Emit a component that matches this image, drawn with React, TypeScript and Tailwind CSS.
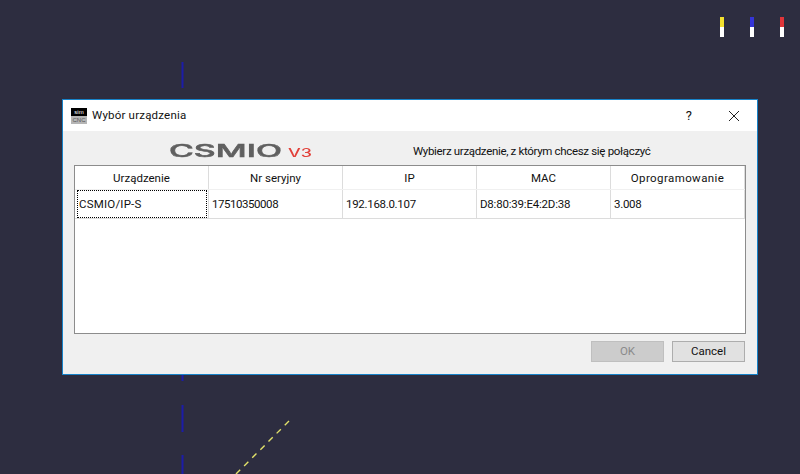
const columns = [
  { title: "Urządzenie", value: "CSMIO/IP-S", head: "", cell: "tracking-[0.2px]" },
  { title: "Nr seryjny", value: "17510350008", head: "", cell: "tracking-[-0.45px]" },
  { title: "IP", value: "192.168.0.107", head: "", cell: "tracking-[-0.3px]" },
  { title: "MAC", value: "D8:80:39:E4:2D:38", head: "", cell: "tracking-[-0.2px]" },
  { title: "Oprogramowanie", value: "3.008", head: "tracking-[0.4px]", cell: "tracking-[-0.3px]" },
];

function Marker({ color, x }: { color: string; x: string }) {
  return (
    <div className={`absolute top-[17px] flex h-5 w-1 flex-col ${x}`}>
      <div className={`h-[10px] ${color}`} />
      <div className="h-[10px] bg-white" />
    </div>
  );
}

function Canvas() {
  return (
    <svg className="absolute inset-0" width="800" height="474" viewBox="0 0 800 474">
      <g stroke="#1c1ca8" strokeWidth="2" fill="none">
        <path d="M182.500 62V88" />
        <path d="M182.500 375V381" />
        <path d="M182.500 405V432" />
        <path d="M182.500 455V474" />
      </g>
      <path d="M289 421L236 474" stroke="#e2e26a" strokeWidth="1.400" strokeDasharray="6 5.500" fill="none" />
    </svg>
  );
}

function Logo() {
  return (
    <svg width="150" height="22" viewBox="0 0 150 22" className="shrink-0 font-['Inter',sans-serif] font-medium">
      <defs>
        <filter id="soft" x="-10%" y="-30%" width="120%" height="160%">
          <feGaussianBlur stdDeviation="0.6" />
        </filter>
      </defs>
      <g filter="url(#soft)">
        <text x="0" y="16.500" fontSize="17" fill="#606060" stroke="#606060" strokeWidth="0.500" textLength="113" lengthAdjust="spacingAndGlyphs">CSMIO</text>
        <text x="119" y="16.500" fontSize="11.500" fill="#e2413a" textLength="24" lengthAdjust="spacingAndGlyphs">V3</text>
      </g>
    </svg>
  );
}

function AppIcon() {
  return (
    <div className="flex h-4 w-4 shrink-0 flex-col overflow-hidden text-center font-['Liberation_Sans',sans-serif] text-[6px] leading-[8px]">
      <div className="h-2 bg-black text-white">sim</div>
      <div className="h-2 bg-[#b5b5b5] text-[#555]">CNC</div>
    </div>
  );
}

export default function App() {
  return (
    <div className="relative h-[474px] w-[800px] overflow-hidden bg-[#2d2d40] font-['Roboto',sans-serif] text-[11.5px] text-[#111]">
      <Canvas />
      <Marker color="bg-[#f2e02e]" x="left-[720px]" />
      <Marker color="bg-[#3535d8]" x="left-[750px]" />
      <Marker color="bg-[#e0353a]" x="left-[780px]" />

      <div className="absolute left-[62px] top-[99px] flex h-[276px] w-[696px] flex-col border border-[#1783c9] bg-[#f0f0f0]">
        <div className="flex h-[31px] shrink-0 items-center bg-white pl-2">
          <AppIcon />
          <span className="ml-[5px] tracking-[0.2px]">Wybór urządzenia</span>
          <span className="ml-auto mr-[36px] text-[13px]">?</span>
          <svg width="12" height="12" viewBox="0 0 12 12" className="mr-[17px]" fill="none" stroke="#222" strokeWidth="1">
            <path d="M1 1L11 11M11 1L1 11" />
          </svg>
        </div>

        <div className="flex min-h-0 flex-1 flex-col px-[11px] pb-3">
          <div className="flex h-[34px] shrink-0 items-center pl-[95px] pt-[5px]">
            <Logo />
            <span className="ml-[94px] mt-[2px] tracking-[-0.33px]">Wybierz urządzenie, z którym chcesz się połączyć</span>
          </div>

          <div className="h-[169px] w-[672px] shrink-0 border border-[#8c8c8c] bg-white">
            <div className="flex h-[24px] border-b border-[#f0f0f0]">
              {columns.map((c) => (
                <div key={c.title} className={`flex w-[134px] items-center justify-center border-r border-[#dcdcdc] pt-[3px] ${c.head}`}>
                  {c.title}
                </div>
              ))}
            </div>
            <div className="flex h-[29px] border-b border-[#dcdcdc]">
              {columns.map((c, i) => (
                <div key={c.title} className={`flex w-[134px] items-center border-r border-[#dcdcdc] pl-[3px] ${c.cell}`}>
                  {i === 0 ? (
                    <div className="-ml-px flex h-[28px] w-[130px] items-center border border-dotted border-black pl-[1px] pt-[2px]">{c.value}</div>
                  ) : (
                    <span className="pt-[2px]">{c.value}</span>
                  )}
                </div>
              ))}
            </div>
          </div>

          <div className="mr-px mt-[7px] flex justify-end gap-2">
            <button className="h-[21px] w-[73px] border border-[#bfbfbf] bg-[#cccccc] text-[#8a8a8a]">OK</button>
            <button className="h-[21px] w-[73px] border border-[#adadad] bg-[#e1e1e1]">Cancel</button>
          </div>
        </div>
      </div>
    </div>
  );
}
